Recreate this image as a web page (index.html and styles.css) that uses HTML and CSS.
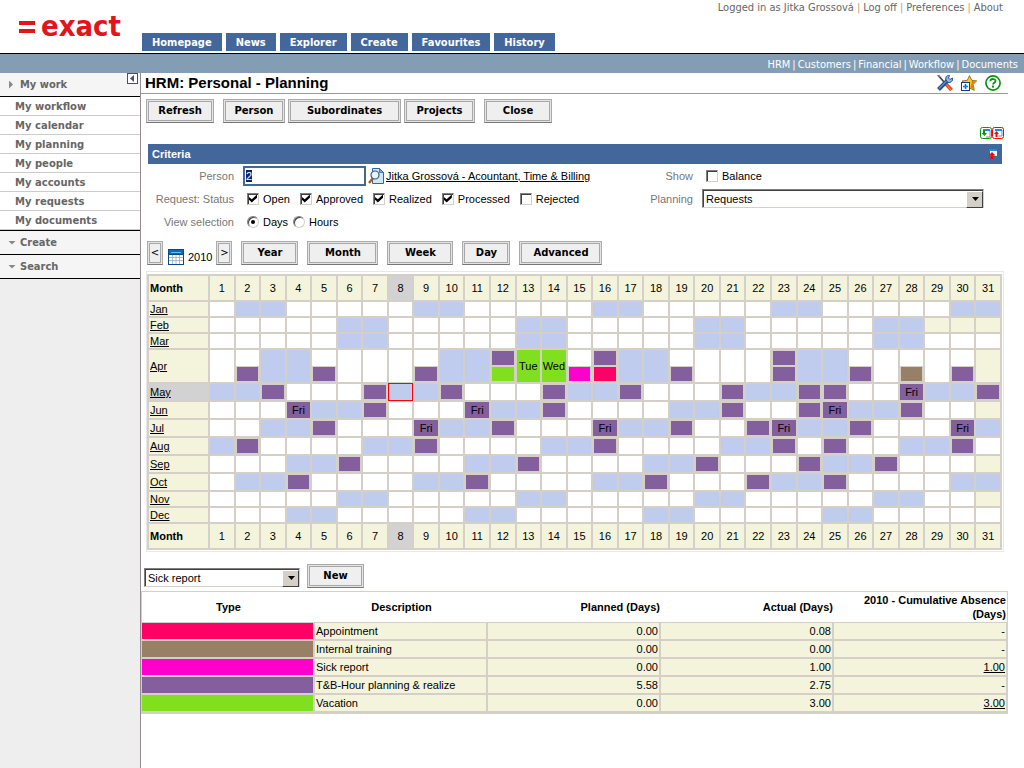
FILE: index.html
```html
<!DOCTYPE html>
<html lang="en">
<head>
<meta charset="utf-8">
<title>HRM: Personal - Planning</title>
<link rel="stylesheet" href="styles.css">
</head>
<body>
<header class="top">
  <div class="logo"><span class="logo-bars"></span><span class="logo-name">exact</span></div>
  <nav class="tabs">
    <a href="#">Homepage</a><a href="#">News</a><a href="#">Explorer</a><a href="#">Create</a><a href="#">Favourites</a><a href="#">History</a>
  </nav>
  <div class="account"><span>Logged in as Jitka Grossová</span><i>|</i><a href="#">Log off</a><i>|</i><a href="#">Preferences</a><i>|</i><a href="#">About</a></div>
</header>
<nav class="modules"><a href="#">HRM</a><i>|</i><a href="#">Customers</a><i>|</i><a href="#">Financial</a><i>|</i><a href="#">Workflow</a><i>|</i><a href="#">Documents</a></nav>
<div class="page">
  <aside class="side">
    <h2 class="side-head"><span class="arrow right"></span>My work
      <button class="collapse" aria-label="Collapse menu"><svg width="11" height="11" viewBox="0 0 11 11"><rect x=".5" y=".5" width="10" height="10" fill="#fff" stroke="#4c4c66"/><path d="M7 2v7L3 5.500z" fill="#4c4c66"/></svg></button>
    </h2>
    <ul class="side-list">
      <li><a href="#">My workflow</a></li>
      <li><a href="#">My calendar</a></li>
      <li><a href="#">My planning</a></li>
      <li><a href="#">My people</a></li>
      <li><a href="#">My accounts</a></li>
      <li><a href="#">My requests</a></li>
      <li><a href="#">My documents</a></li>
    </ul>
    <h2 class="side-head"><span class="arrow down"></span>Create</h2>
    <h2 class="side-head"><span class="arrow down"></span>Search</h2>
  </aside>
  <main class="main">
    <div class="title-row">
      <h1>HRM: Personal - Planning</h1>
      <div class="title-icons">
        <svg width="16" height="16" viewBox="0 0 16 16"><path d="M1 0l6 7" stroke="#445" stroke-width="1.800"/><path d="M0 0l2 3 1-2z" fill="#889"/><path d="M8 8l6.500 7" stroke="#e8481c" stroke-width="3.600"/><path d="M9 9l5 6" stroke="#ff8a50" stroke-width="1"/><path d="M1.500 14.500L11 5" stroke="#24508c" stroke-width="4"/><path d="M2 13.500L11 4.500" stroke="#5a90cc" stroke-width="1.200"/><path d="M9 5c-1-3 1-5 3.500-4.500L11.500 3l1.500 1.500L15.500 3c1 3-2 5-4.500 4.500z" fill="#8fb8e0" stroke="#24508c"/></svg>
        <svg width="16" height="16" viewBox="0 0 16 16"><path d="M8.500.5l2.200 4.800 5 .6-3.600 3.500 1.200 6-4.800-2.500-4 2 .7-5.500L1 6l5.300-.7z" fill="#ffc820" stroke="#8a5a00" stroke-width=".8"/><path d="M11 6l4 .2-3.200 3.100 1.100 5.100-3.400-2z" fill="#f07818"/><rect x=".5" y="7.500" width="8" height="8" fill="#fff" stroke="#103c88"/><path d="M4.500 9v5M2 11.500h5" stroke="#0878e8" stroke-width="1.600"/></svg>
        <svg width="16" height="16" viewBox="0 0 16 16"><circle cx="8" cy="8" r="7.100" fill="#fff" stroke="#0a9410" stroke-width="1.700"/><path d="M5.300 6.200c.2-3 5.500-2.800 5.200 0-.2 1.600-2.500 1.500-2.500 3.300" fill="none" stroke="#0a9410" stroke-width="1.800"/><rect x="7" y="10.600" width="2" height="2" fill="#0a9410"/></svg>
      </div>
    </div>

    <div class="actions">
      <button class="btn w68">Refresh</button>
      <button class="btn w62 apart">Person</button>
      <button class="btn w113">Subordinates</button>
      <button class="btn w71">Projects</button>
      <button class="btn w68 apart">Close</button>
    </div>
    <div class="expanders">
      <svg width="12" height="12" viewBox="0 0 12 12"><path d="M4 2h6v8H4z" fill="#fff"/><path d="M10 3v7H6" fill="none" stroke="#888"/><path d="M3 2h7v2H3z" fill="#1090f0"/><path d="M3 3h2v3h2L4.500 9 1.500 6H3z" fill="#0a9410"/><rect x=".5" y=".5" width="11" height="11" rx="2" fill="none" stroke="#0a9410"/></svg><svg width="12" height="12" viewBox="0 0 12 12"><path d="M4 2h6v8H4z" fill="#fff"/><path d="M10 3v6H6" fill="none" stroke="#888"/><path d="M3 2h7v2H3z" fill="#1090f0"/><path d="M4.500 4L7 7H5.500v3h-2V7H2z" fill="#f00"/><rect x=".5" y=".5" width="11" height="11" rx="2" fill="none" stroke="#f00"/></svg>
    </div>

    <section class="criteria">
      <h2 class="bar">Criteria
        <svg width="10" height="10" viewBox="0 0 10 10"><path d="M2 0h7v7H2z" fill="#fff"/><path d="M1 0h8v2H1z" fill="#1090f0"/><path d="M4 3l3.500 3.500H5.500V10h-3V6.500H.5z" fill="#f00"/></svg>
      </h2>
      <div class="form">
        <label class="lbl" for="person">Person</label>
        <div class="field"><input class="text" id="person" type="text" value="2" autofocus>
          <svg class="lookup" width="16" height="16" viewBox="0 0 16 16"><path d="M4.500.5h7l4 4v11h-11z" fill="#cfe6fa" stroke="#2868b0"/><path d="M11.500.5v4h4z" fill="#6aaee8" stroke="#2868b0" stroke-width=".8"/><path d="M5 10L1 15" stroke="#b85a10" stroke-width="2.400"/><circle cx="7" cy="7" r="4" fill="#e4f4ff" stroke="#456" stroke-width="1.200"/></svg><a class="name" href="#">Jitka Grossová - Acountant, Time &amp; Billing</a></div>
        <span class="lbl">Show</span>
        <div class="field checks"><label><input type="checkbox">Balance</label></div>

        <span class="lbl">Request: Status</span>
        <div class="field checks">
          <label><input type="checkbox" checked>Open</label>
          <label><input type="checkbox" checked>Approved</label>
          <label><input type="checkbox" checked>Realized</label>
          <label><input type="checkbox" checked>Processed</label>
          <label><input type="checkbox">Rejected</label>
        </div>
        <label class="lbl" for="planning">Planning</label>
        <div class="select"><select id="planning"><option>Requests</option></select></div>

        <span class="lbl">View selection</span>
        <div class="field radios">
          <label><input type="radio" name="view" checked>Days</label>
          <label><input type="radio" name="view">Hours</label>
        </div>
      </div>
    </section>

    <div class="period">
      <button class="btn step">&lt;</button>
      <svg width="16" height="16" viewBox="0 0 16 16"><rect width="16" height="16" fill="#0a4a88"/><rect x="1" y="1" width="14" height="4" fill="#0a6cb4"/><path d="M3 3.500h10" stroke="#6ac0f0"/><rect x="1" y="6" width="14" height="9" fill="#fff"/><path d="M1 8.500h14M1 11.500h14M4.500 6v9M8 6v9M11.500 6v9" stroke="#9ab" stroke-width=".8"/></svg>
      <span class="year">2010</span>
      <button class="btn step">&gt;</button>
      <div class="ranges">
        <button class="btn w57">Year</button>
        <button class="btn w71">Month</button>
        <button class="btn w66">Week</button>
        <button class="btn w48">Day</button>
        <button class="btn w83">Advanced</button>
      </div>
    </div>

    <div class="cal-box">
      <table class="cal" id="calendar"></table>
    </div>

    <div class="new-row">
      <div class="select kind"><select aria-label="Request type"><option>Sick report</option></select></div>
      <button class="btn w57">New</button>
    </div>

    <table class="totals">
      <thead><tr><th class="mid">Type</th><th class="mid">Description</th><th>Planned (Days)</th><th>Actual (Days)</th><th>2010 - Cumulative Absence (Days)</th></tr></thead>
      <tbody>
        <tr><td class="k-app"></td><td class="desc">Appointment</td><td>0.00</td><td>0.08</td><td>-</td></tr>
        <tr><td class="k-train"></td><td class="desc">Internal training</td><td>0.00</td><td>0.00</td><td>-</td></tr>
        <tr><td class="k-sick"></td><td class="desc">Sick report</td><td>0.00</td><td>1.00</td><td><a href="#">1.00</a></td></tr>
        <tr><td class="k-plan"></td><td class="desc">T&amp;B-Hour planning &amp; realize</td><td>5.58</td><td>2.75</td><td>-</td></tr>
        <tr><td class="k-vac"></td><td class="desc">Vacation</td><td>0.00</td><td>3.00</td><td><a href="#">3.00</a></td></tr>
      </tbody>
    </table>
  </main>
</div>
<script src="calendar.js"></script>
</body>
</html>
```
FILE: styles.css
```css
* { box-sizing: border-box; }
body { margin: 0; background: #fff; color: #000; font: 11px/14px "Liberation Sans", Arial, sans-serif; min-height: 100vh; display: flex; flex-direction: column; }
h1, h2, ul { margin: 0; padding: 0; }
ul { list-style: none; }
a { color: inherit; text-decoration: none; }
i { font-style: normal; }
svg { display: block; flex: none; }
button, input, select { font: inherit; color: inherit; margin: 0; }

/* Header */
.top { display: flex; height: 54px; border-bottom: 1px solid #000; font-family: "DejaVu Sans Condensed", "DejaVu Sans", sans-serif; }
.logo { width: 142px; padding: 10px 0 0 19px; display: flex; gap: 6px; color: #e2141c; flex: none; }
.logo-bars { width: 16px; height: 12px; margin-top: 11px; border: solid #e2141c; border-width: 4px 0; }
.logo-name { font-size: 29px; line-height: 32px; font-weight: bold; }
.tabs { display: flex; gap: 4px; align-self: flex-end; padding-bottom: 2px; }
.tabs a { background: #44679b; color: #fff; font-weight: bold; line-height: 17px; padding: 1px 10px 0; }
.account { margin-left: auto; padding: 1px 21px 0 0; color: #666; display: flex; gap: 3px; }
.account i { color: #caa060; }
.modules { background: #839eb4; color: #fff; height: 19px; line-height: 21px; display: flex; justify-content: flex-end; gap: 2px; padding-right: 6px; font-family: "DejaVu Sans Condensed", "DejaVu Sans", sans-serif; }

.page { display: flex; flex: 1; }

/* Side menu */
.side { width: 141px; flex: none; background: #eee; border-right: 1px solid #948c90; color: #666; }
.side-head { display: flex; align-items: center; height: 24px; padding-left: 8px; background: #f5f5f5; border-bottom: 1px solid #000; font: bold 11px/24px "DejaVu Sans Condensed", "DejaVu Sans", sans-serif; }
.arrow { width: 12px; flex: none; }
.arrow::before { content: ""; display: block; background: #888; }
.arrow.right::before { width: 4px; height: 8px; margin-left: 1px; clip-path: polygon(0 0, 100% 50%, 0 100%); }
.arrow.down::before { width: 8px; height: 4px; clip-path: polygon(0 0, 100% 0, 50% 100%); }
.collapse { margin: 0 2px 0 auto; align-self: flex-start; border: 0; padding: 0; background: none; }
.side-list { border-bottom: 1px solid #000; }
.side-list li { height: 19px; padding-left: 15px; background: #fff; border-bottom: 1px solid #ccc; font: bold 10px/19px "DejaVu Sans", sans-serif; }

/* Title */
.main { flex: 1; min-width: 0; padding-right: 16px; }
.title-row { display: flex; align-items: center; height: 21px; padding: 0 7px 0 4px; border-bottom: 1px solid #999; }
h1 { font-size: 15px; line-height: 18px; }
.title-icons { display: flex; gap: 8px; margin-left: auto; }

/* Buttons */
.btn { height: 24px; padding: 0 0 1px; border: 1px solid #aaa; border-bottom-color: #777; border-radius: 0; background: #efefef; box-shadow: inset 0 0 0 1px #e4e4e4, inset 0 0 0 2px #a8a8a8; font: bold 10px/14px "DejaVu Sans", sans-serif; text-align: center; flex: none; }
.w48 { width: 48px; }
.w57 { width: 57px; }
.w62 { width: 62px; }
.w66 { width: 66px; }
.w68 { width: 68px; }
.w71 { width: 71px; }
.w83 { width: 83px; }
.w113 { width: 113px; }
.actions { display: flex; gap: 3px; padding: 5px 0 0 5px; }
.apart { margin-left: 6px; }
.expanders { display: flex; justify-content: flex-end; padding: 4px 4px 5px 0; }

/* Criteria */
.criteria { margin: 0 6px 0 7px; }
.bar { display: flex; align-items: center; justify-content: space-between; height: 20px; padding: 0 4px; background: #44679b; color: #fff; font-size: 11px; }
.form { display: grid; grid-template-columns: 86px 1fr 60px 282px; grid-auto-rows: 23px; column-gap: 9px; align-items: center; padding-right: 18px; }
.lbl { color: #777; text-align: right; }
.field { display: flex; align-items: center; }
.text { width: 123px; height: 20px; border: 2px solid #44679b; padding: 0 1px; background: #fff; outline: 0; border-radius: 0; }
.text::selection { background: #0a246a; color: #fff; }
.lookup { margin: 0 2px; }
.name, .totals a, .cal a { text-decoration: underline; }
.checks { gap: 10px; padding-left: 4px; }
.radios { gap: 5px; padding-left: 4px; }
.checks label, .radios label { display: flex; align-items: center; gap: 4px; }
input[type="checkbox"], input[type="radio"] { appearance: none; width: 12px; height: 12px; background: #fff; border: 1px solid #d4d0c8; border-top-color: #808080; border-left-color: #808080; box-shadow: inset 1px 1px 0 #404040; }
input[type="radio"] { border-radius: 50%; }
input[type="checkbox"]:checked::before { content: ""; display: block; width: 8px; height: 8px; margin: 1px; background: #000; clip-path: polygon(0 30%, 35% 60%, 100% 0, 100% 40%, 35% 100%, 0 65%); }
input[type="radio"]:checked::before { content: ""; display: block; width: 4px; height: 4px; margin: 3px; border-radius: 50%; background: #000; }
.select { position: relative; height: 19px; }
.select select { appearance: none; width: 100%; height: 19px; padding: 0 20px 0 3px; border: 1px solid #d4d0c8; border-top-color: #808080; border-left-color: #808080; border-radius: 0; background: #fff; box-shadow: inset 1px 1px 0 #404040; }
.select::before { content: ""; position: absolute; top: 2px; right: 1px; width: 15px; height: 15px; background: #d4d0c8; border: 1px solid #fff; border-right-color: #404040; border-bottom-color: #404040; pointer-events: none; }
.select::after { content: ""; position: absolute; top: 8px; right: 5px; width: 7px; height: 4px; background: #000; clip-path: polygon(0 0, 100% 0, 50% 100%); pointer-events: none; }

/* Period */
.period { display: flex; align-items: center; padding: 8px 0 0 6px; gap: 4px; }
.period svg, .year { margin-top: 7px; }
.period svg { margin-left: 1px; }
.step { width: 16px; font: 10px/14px "DejaVu Sans", sans-serif; }
.ranges { display: flex; gap: 9px; padding-left: 5px; }

/* Year calendar */
.cal-box { margin: 6px 4px 0 5px; padding: 2px 1px 1px 0; border: 1px solid #e8e8e8; }
.cal { width: 100%; table-layout: fixed; border-collapse: separate; border-spacing: 2px; background: #d4d0c8; }
.cal td, .cal th { padding: 0; height: 14px; line-height: 14px; background: #fff; text-align: center; font-weight: normal; }
.cal th { background: #f4f4dc; }
.cal .month { width: 59px; padding-left: 1px; text-align: left; }
.cal .edge th { height: 24px; }
.cal .edge .month { font-weight: bold; }
.cal .mid td, .cal .mid th { height: 16px; }
.cal .tall td, .cal .tall th { height: 32px; }
.cal td.rest { background: #c0cced; }
.cal td.none { background: #f4f4dc; }
.cal .now { background: #d2d2d2; }
.cal td.today { outline: 1px solid #f00; }
.slot { display: block; height: 16px; border: 1px solid transparent; background-clip: padding-box; }
.slot.on { border-color: #d4d0c8; }
.cal td.k-plan, .k-plan { background-color: #835f9e; }
.cal td.k-vac, .k-vac { background-color: #80e020; }
.cal td.k-sick, .k-sick { background-color: #ff00cc; }
.cal td.k-app, .k-app { background-color: #ff0066; }
.cal td.k-train, .k-train { background-color: #988066; }

.new-row { display: flex; align-items: center; gap: 7px; padding: 12px 0 0 3px; }
.kind { width: 156px; margin-top: 3px; }

/* Totals */
.totals { width: 100%; margin-top: 3px; table-layout: fixed; border-collapse: separate; border-spacing: 0; border: 1px solid #d4d0c8; }
.totals th { height: 31px; padding: 0 1px; text-align: right; border-bottom: 1px solid #d4d0c8; }
.totals th.mid { text-align: center; }
.totals td { height: 18px; padding: 0 1px; text-align: right; border: solid #d4d0c8; border-width: 0 2px 2px 0; }
.totals tbody td:not([class^="k-"]) { background: #f4f4dc; }
.totals td.desc { text-align: left; }
.totals td:last-child { border-right-width: 1px; }
```
FILE: calendar.js
```js
const YEAR = 2010;
const TODAY = { month: 4, day: 8 };
const NAMES = ["Jan", "Feb", "Mar", "Apr", "May", "Jun", "Jul", "Aug", "Sep", "Oct", "Nov", "Dec"];

// Per month: day -> list of slots, or a whole-day entry { kind, text }.
const P = ["plan"], F = { kind: "plan", text: "Fri" }, B = ["", "plan"];
const entries = {
  3: { 2: B, 5: B, 9: B, 12: ["plan", "vac"], 13: { kind: "vac", text: "Tue" }, 14: { kind: "vac", text: "Wed" },
       15: ["", "sick"], 16: ["plan", "app"], 19: B, 23: ["plan", "plan"], 26: B, 28: ["", "train"], 30: B },
  4: { 3: P, 7: P, 10: P, 14: P, 17: P, 21: P, 24: P, 25: P, 28: F, 31: P },
  5: { 4: F, 7: P, 11: F, 14: P, 21: P, 24: P, 25: F, 28: P },
  6: { 5: P, 9: F, 12: P, 16: F, 19: P, 22: P, 23: F, 26: P, 30: F },
  7: { 2: P, 9: P, 16: P, 23: P, 25: P, 30: P },
  8: { 6: P, 13: P, 20: P, 24: P, 27: P },
  9: { 4: P, 11: P, 18: P, 22: P, 25: P }
};

const days = Array.from({ length: 31 }, (_, i) => i + 1);

function edgeRow() {
  return '<tr class="edge"><th class="month">Month</th>' +
    days.map(d => `<th${d === TODAY.day ? ' class="now"' : ""}>${d}</th>`).join("") + "</tr>";
}

function dayCell(month, day) {
  const date = new Date(YEAR, month, day);
  if (date.getMonth() !== month) return '<td class="none"></td>';
  const entry = entries[month] && entries[month][day];
  if (Array.isArray(entry)) {
    return "<td>" + entry.map(k => `<span class="slot${k ? " on k-" + k : ""}"></span>`).join("") + "</td>";
  }
  if (entry) return `<td class="k-${entry.kind}">${entry.text}</td>`;
  const cls = [];
  if (date.getDay() % 6 === 0) cls.push("rest");
  if (month === TODAY.month && day === TODAY.day) cls.push("today");
  return `<td class="${cls.join(" ")}"></td>`;
}

function monthRow(month) {
  const size = month === 3 ? "tall" : entries[month] ? "mid" : "";
  const now = month === TODAY.month ? " now" : "";
  return `<tr class="${size}"><th class="month${now}"><a href="#">${NAMES[month]}</a></th>` +
    days.map(d => dayCell(month, d)).join("") + "</tr>";
}

document.getElementById("calendar").innerHTML =
  edgeRow() + NAMES.map((_, m) => monthRow(m)).join("") + edgeRow();

document.getElementById("person").select();
```
